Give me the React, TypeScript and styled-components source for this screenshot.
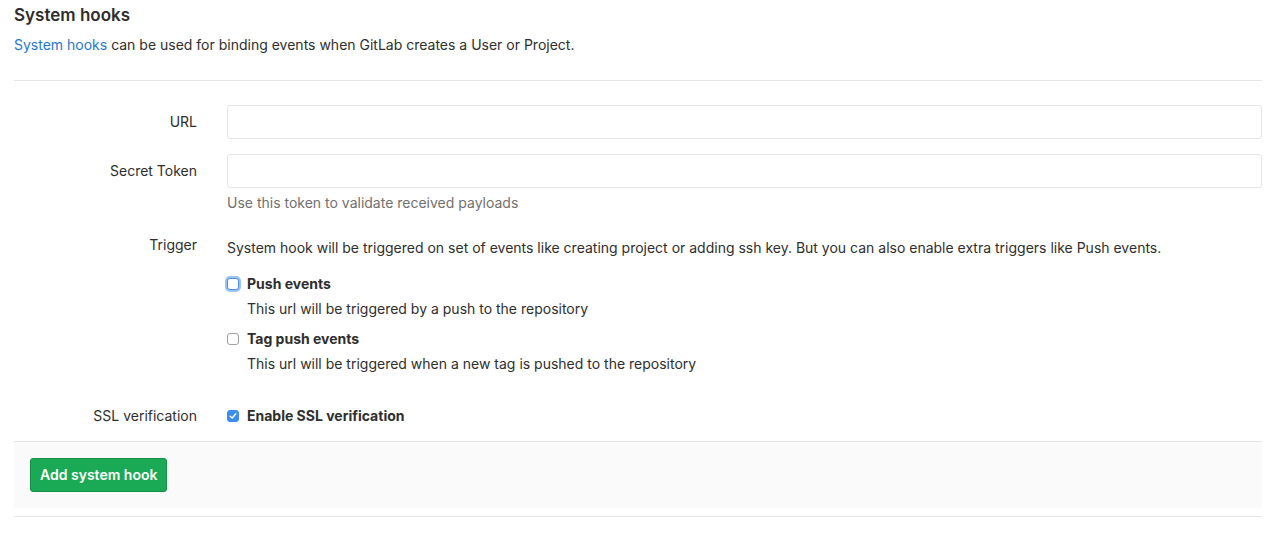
import React from "react";
import styled, { createGlobalStyle } from "styled-components";

const Global = createGlobalStyle`
  html, body { margin: 0; padding: 0; background: #fff; }
  body {
    font-family: Inter, "Noto Sans", "Liberation Sans", sans-serif;
    font-size: 14px;
    line-height: 20px;
    color: #2e2e2e;
  }
  * { box-sizing: border-box; }
`;

const Page = styled.div`
  padding: 0 15px 0 14px;
`;

const Title = styled.h4`
  margin: 0;
  padding-top: 4px;
  font-size: 17px;
  line-height: 22px;
  font-weight: 600;
  color: #2e2e2e;
`;

const Intro = styled.p`
  margin: 9px 0 0;
`;

const Link = styled.a`
  color: #1f78d1;
  text-decoration: none;
`;

const Divider = styled.hr`
  margin: 25px 0 0;
  border: 0;
  border-top: 1px solid #e5e5e5;
`;

const Form = styled.form`
  padding-top: 24px;
`;

const Row = styled.div<{ $mb?: number }>`
  display: grid;
  grid-template-columns: 183px 1fr;
  column-gap: 30px;
  margin-bottom: ${(p) => p.$mb ?? 15}px;
`;

const Label = styled.label<{ $pt?: number }>`
  text-align: right;
  padding-top: ${(p) => p.$pt ?? 7}px;
  line-height: 20px;
`;

const Input = styled.input`
  display: block;
  width: 100%;
  height: 34px;
  border: 1px solid #e5e5e5;
  border-radius: 3px;
  padding: 6px 10px;
  font: inherit;
  outline: none;
`;

const Help = styled.p`
  margin: 5px 0 0;
  color: #707070;
`;

const Field = styled.div``;

const Lead = styled.p`
  margin: 0 0 16px;
  padding-top: 3px;
`;

const CheckRow = styled.label`
  display: flex;
  align-items: center;
  gap: 8px;
  font-weight: 700;
  line-height: 20px;
`;

const CheckDesc = styled.p`
  margin: 5px 0 10px 20px;
`;

const Box = styled.span<{ $focus?: boolean; $checked?: boolean }>`
  width: 12px;
  height: 12px;
  flex: none;
  border-radius: 3px;
  display: inline-flex;
  align-items: center;
  justify-content: center;
  border: 1px solid ${(p) => (p.$checked ? "#3b8cf0" : p.$focus ? "#4a90e2" : "#a0a0a0")};
  background: ${(p) => (p.$checked ? "#3b8cf0" : "#fff")};
  box-shadow: ${(p) => (p.$focus ? "0 0 0 2px #9cc3f3" : "none")};
`;

const Footer = styled.div`
  margin-top: 15px;
  background: #fafafa;
  border-top: 1px solid #e5e5e5;
  padding: 16px 16px 16px;
`;

const Button = styled.button`
  font: inherit;
  font-weight: 600;
  color: #fff;
  background: #1aaa55;
  border: 1px solid #168f48;
  border-radius: 3px;
  height: 34px;
  padding: 0 9px;
`;

const Bottom = styled.hr`
  margin: 8px 0 0;
  border: 0;
  border-top: 1px solid #e5e5e5;
`;

const Check = ({ checked, focus }: { checked?: boolean; focus?: boolean }) => (
  <Box $checked={checked} $focus={focus}>
    {checked && (
      <svg width="8" height="8" viewBox="0 0 8 8">
        <path d="M1.2 4.2 L3.2 6 L6.8 1.8" fill="none" stroke="#fff" strokeWidth="1.5" strokeLinecap="round" strokeLinejoin="round" />
      </svg>
    )}
  </Box>
);

export default function App() {
  return (
    <>
      <Global />
      <Page>
        <Title>System hooks</Title>
        <Intro>
          <Link href="#">System hooks</Link> can be used for binding events when GitLab creates a User or Project.
        </Intro>
        <Divider />
        <Form>
          <Row>
            <Label>URL</Label>
            <Input />
          </Row>
          <Row $mb={22}>
            <Label>Secret Token</Label>
            <Field>
              <Input />
              <Help>Use this token to validate received payloads</Help>
            </Field>
          </Row>
          <Row $mb={22}>
            <Label $pt={0}>Trigger</Label>
            <Field>
              <Lead>
                System hook will be triggered on set of events like creating project or adding ssh key. But you can also enable extra triggers like Push events.
              </Lead>
              <CheckRow>
                <Check focus />
                Push events
              </CheckRow>
              <CheckDesc>This url will be triggered by a push to the repository</CheckDesc>
              <CheckRow>
                <Check />
                Tag push events
              </CheckRow>
              <CheckDesc>This url will be triggered when a new tag is pushed to the repository</CheckDesc>
            </Field>
          </Row>
          <Row $mb={0}>
            <Label $pt={0}>SSL verification</Label>
            <CheckRow>
              <Check checked />
              Enable SSL verification
            </CheckRow>
          </Row>
          <Footer>
            <Button type="button">Add system hook</Button>
          </Footer>
        </Form>
        <Bottom />
      </Page>
    </>
  );
}
